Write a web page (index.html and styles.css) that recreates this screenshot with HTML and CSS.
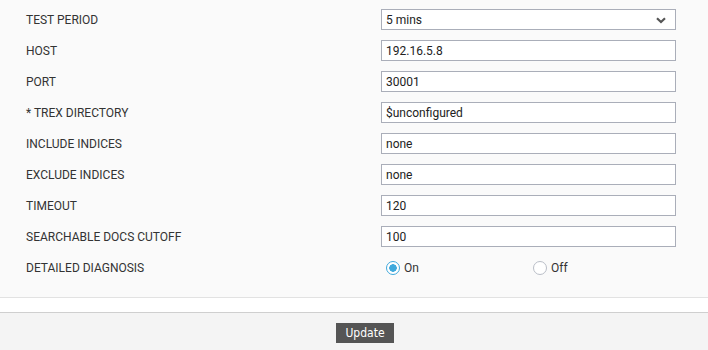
FILE: index.html
```html
<!DOCTYPE html>
<html>
<head>
    <title>Test Configuration</title>
    <link rel="stylesheet" href="styles.css">
</head>
<body>
    <form class="config-form">
        <div class="row">
            <label class="label">TEST PERIOD</label>
            <div class="field select-wrap">
                <select class="input">
                    <option selected>5 mins</option>
                    <option>10 mins</option>
                    <option>15 mins</option>
                </select>
                <svg class="chevron" width="10" height="7" viewBox="0 0 10 7">
                    <path d="M1 1.2 L5 5 L9 1.2" fill="none" stroke="#555" stroke-width="2.2"/>
                </svg>
            </div>
        </div>
        <div class="row">
            <label class="label">HOST</label>
            <div class="field"><input class="input" type="text" value="192.16.5.8"></div>
        </div>
        <div class="row">
            <label class="label">PORT</label>
            <div class="field"><input class="input" type="text" value="30001"></div>
        </div>
        <div class="row">
            <label class="label">* TREX DIRECTORY</label>
            <div class="field"><input class="input" type="text" value="$unconfigured"></div>
        </div>
        <div class="row">
            <label class="label">INCLUDE INDICES</label>
            <div class="field"><input class="input" type="text" value="none"></div>
        </div>
        <div class="row">
            <label class="label">EXCLUDE INDICES</label>
            <div class="field"><input class="input" type="text" value="none"></div>
        </div>
        <div class="row">
            <label class="label">TIMEOUT</label>
            <div class="field"><input class="input" type="text" value="120"></div>
        </div>
        <div class="row">
            <label class="label">SEARCHABLE DOCS CUTOFF</label>
            <div class="field"><input class="input" type="text" value="100"></div>
        </div>
        <div class="row">
            <label class="label">DETAILED DIAGNOSIS</label>
            <div class="field radios">
                <label class="radio"><span class="dot checked"></span>On</label>
                <label class="radio"><span class="dot"></span>Off</label>
            </div>
        </div>
    </form>
    <div class="spacer"></div>
    <div class="footer">
        <button class="update-btn" type="button">Update</button>
    </div>
</body>
</html>
```

FILE: styles.css
```css
body {
    font-family: Roboto, "Liberation Sans", Arial, sans-serif;
    font-size: 12px;
    color: #333;
    margin: 0;
    background-color: #fafafa;
}
.config-form {
    padding: 4px 0 14px 26px;
    border-bottom: 1px solid #e2e2e2;
}
.row {
    display: grid;
    grid-template-columns: 355px 295px;
    align-items: center;
    height: 21px;
    padding: 5px 0;
}
.label {
    color: #333;
    padding-top: 1px;
}
.field {
    height: 21px;
}
.input {
    box-sizing: border-box;
    width: 100%;
    height: 21px;
    padding: 0 4px;
    margin: 0;
    border: 1px solid #aaaeb9;
    background-color: #fff;
    font-family: Roboto, "Liberation Sans", Arial, sans-serif;
    font-size: 12px;
    color: #222;
    outline: none;
}
.select-wrap {
    position: relative;
}
select.input {
    appearance: none;
    -webkit-appearance: none;
    padding-left: 4px;
}
.chevron {
    position: absolute;
    right: 10px;
    top: 8px;
    pointer-events: none;
}
.radios {
    display: grid;
    grid-template-columns: 147px 148px;
    align-items: center;
}
.radio {
    display: flex;
    align-items: center;
    color: #333;
    padding-left: 5px;
}
.dot {
    box-sizing: border-box;
    width: 14px;
    height: 14px;
    border-radius: 50%;
    border: 1px solid #b9bec7;
    background-color: #fff;
    margin-right: 4px;
}
.dot.checked {
    border-color: #3fa9dc;
    background: radial-gradient(circle, #3fa9dc 0 3.5px, #fff 4px);
}
.spacer {
    height: 14px;
    background-color: #fff;
    border-bottom: 1px solid #cfcfcf;
}
.footer {
    background-color: #f4f4f4;
    text-align: center;
    padding: 10px 0 10px 22px;
}
.update-btn {
    background-color: #555;
    color: #fff;
    border: none;
    height: 20px;
    width: 58px;
    padding: 0;
    font-family: "DejaVu Sans", sans-serif;
    font-stretch: condensed;
    font-weight: normal;
    font-size: 12px;
    cursor: pointer;
}
```
